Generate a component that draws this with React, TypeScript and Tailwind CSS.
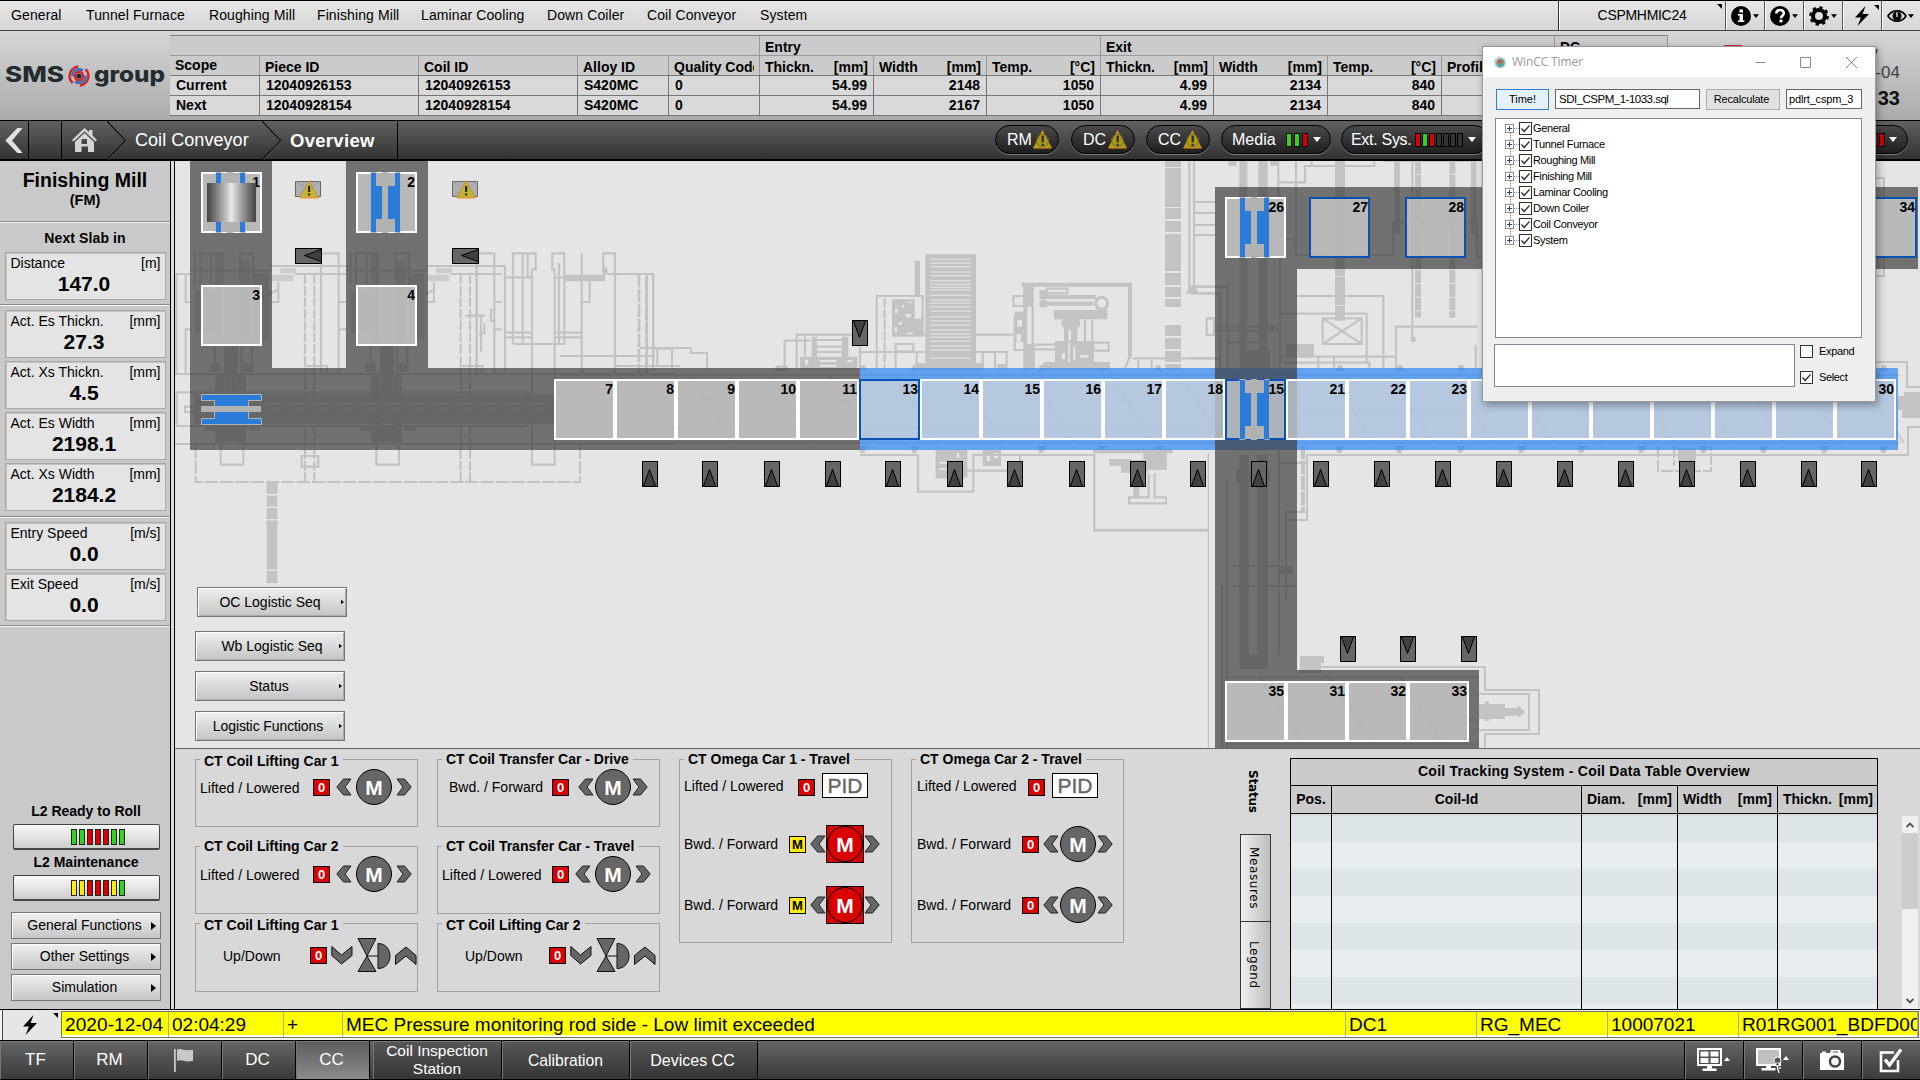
import React from "react";

const OX = 175;
const OY = 161;

/* ---------- small glyphs ---------- */

function Bolt({ className = "" }: { className?: string }) {
  return (
    <svg viewBox="0 0 16 20" className={className}>
      <path d="M11.5 0 1 11.5h6L3.5 20 15 8H8.6z" fill="#000" />
    </svg>
  );
}

function Warning({ className = "" }: { className?: string }) {
  return (
    <svg viewBox="0 0 20 20" className={className}>
      <path d="M10 .8 19.4 19H.6z" fill="#a89c1c" stroke="#e08a1e" strokeWidth="1" />
      <circle cx="10" cy="11" r="6.4" fill="none" stroke="#6d6a30" strokeWidth="1" />
      <path d="M9 6h2.4v7H9zM9 14.4h2.4v2.2H9z" fill="#2e2a08" />
    </svg>
  );
}

function Caret({ className = "" }: { className?: string }) {
  return (
    <svg viewBox="0 0 8 5" className={className}>
      <path d="M0 0h8L4 5z" fill="currentColor" />
    </svg>
  );
}

/* ---------- menu bar ---------- */

const MENU: [string, string][] = [
  ["General", "w-[75px]"],
  ["Tunnel Furnace", "w-[123px]"],
  ["Roughing Mill", "w-[108px]"],
  ["Finishing Mill", "w-[104px]"],
  ["Laminar Cooling", "w-[126px]"],
  ["Down Coiler", "w-[100px]"],
  ["Coil Conveyor", "w-[113px]"],
  ["System", "w-[80px]"],
];

function ToolCell({ children }: { children: React.ReactNode }) {
  return (
    <div className="relative flex h-full w-[39px] shrink-0 items-center border-l border-[#555] pl-[5px] shadow-[inset_1px_0_0_#fff]">
      {children}
    </div>
  );
}

function MenuBar() {
  return (
    <div className="flex h-[31px] shrink-0 border-t border-b border-t-black border-b-[#444] bg-gradient-to-b from-[#e6e6e6] to-[#d6d6d6]">
      <div className="flex items-center pl-[11px] text-[14px] tracking-[0.1px] text-black">
        {MENU.map(([t, w]) => (
          <div key={t} className={w + " whitespace-nowrap"}>{t}</div>
        ))}
      </div>
      <div className="grow" />
      <div className="relative flex w-[167px] items-center justify-center border-l border-[#333] text-[14px] -tracking-[0.300px] shadow-[inset_1px_0_0_#fff]">
        CSPMHMIC24
        <svg viewBox="0 0 5 5" className="absolute top-[3px] right-[3px] h-[5px] w-[5px]"><path d="M0 0h5v5z" /></svg>
      </div>
      <ToolCell>
        <svg viewBox="0 0 20 20" className="h-5 w-5"><circle cx="10" cy="10" r="10" /><path d="M8.4 3.6h3.6v3H8.4zM7 8h5v6.4h1.4V16H7v-1.6h1.6V9.6H7z" fill="#fff" /></svg>
        <Caret className="ml-[2px] h-[4px] w-[6px]" />
      </ToolCell>
      <ToolCell>
        <svg viewBox="0 0 20 20" className="h-5 w-5"><circle cx="10" cy="10" r="10" /><path d="M6.3 7.6C6.3 2.9 14 3 13.8 7.3c-.1 2.400-2.800 2.600-2.800 5" fill="none" stroke="#fff" strokeWidth="2.6" /><rect x="9.5" y="13.6" width="3" height="2.8" fill="#fff" /></svg>
        <Caret className="ml-[2px] h-[4px] w-[6px]" />
      </ToolCell>
      <ToolCell>
        <svg viewBox="0 0 20 20" className="h-5 w-5">
          <circle cx="10" cy="10" r="6" fill="none" stroke="#000" strokeWidth="4" />
          <circle cx="10" cy="10" r="8.6" fill="none" stroke="#000" strokeWidth="2.4" strokeDasharray="3.3 3.45" />
        </svg>
        <Caret className="ml-[2px] h-[4px] w-[6px]" />
      </ToolCell>
      <ToolCell>
        <Bolt className="ml-[5px] h-[20px] w-[18px]" />
        <svg viewBox="0 0 5 5" className="absolute top-[4px] right-[2px] h-[5px] w-[5px]"><path d="M0 0h5v5z" /></svg>
      </ToolCell>
      <ToolCell>
        <svg viewBox="0 0 22 16" className="h-4 w-[20px]">
          <path d="M1 8C6 .5 16 .5 21 8 16 15.500 6 15.500 1 8z" fill="none" stroke="#000" strokeWidth="1.8" />
          <circle cx="11" cy="8" r="5" />
          <path d="M11 4v5" stroke="#ddd" strokeWidth="1.6" />
        </svg>
        <Caret className="ml-[1px] h-[4px] w-[6px]" />
      </ToolCell>
    </div>
  );
}

/* ---------- header with piece table ---------- */

type Col = { w: string; h: string; u?: string; a: string; b: string };
const COLS: Col[] = [
  { w: "w-[90px]", h: "Scope", a: "Current", b: "Next" },
  { w: "w-[159px]", h: "Piece ID", a: "12040926153", b: "12040928154" },
  { w: "w-[159px]", h: "Coil ID", a: "12040926153", b: "12040928154" },
  { w: "w-[91px]", h: "Alloy ID", a: "S420MC", b: "S420MC" },
  { w: "w-[91px]", h: "Quality Code", a: "0", b: "0" },
  { w: "w-[114px]", h: "Thickn.", u: "[mm]", a: "54.99", b: "54.99" },
  { w: "w-[113px]", h: "Width", u: "[mm]", a: "2148", b: "2167" },
  { w: "w-[114px]", h: "Temp.", u: "[°C]", a: "1050", b: "1050" },
  { w: "w-[113px]", h: "Thickn.", u: "[mm]", a: "4.99", b: "4.99" },
  { w: "w-[114px]", h: "Width", u: "[mm]", a: "2134", b: "2134" },
  { w: "w-[114px]", h: "Temp.", u: "[°C]", a: "840", b: "840" },
  { w: "w-[113px]", h: "Profil", a: "", b: "" },
  { w: "w-[113px]", h: "", a: "", b: "" },
];

function Header() {
  const groups: [string, string][] = [
    ["w-[590px]", ""],
    ["w-[341px]", "Entry"],
    ["w-[454px]", "Exit"],
    ["w-[113px]", "DC"],
  ];
  return (
    <div className="flex h-[89px] shrink-0 bg-gradient-to-b from-[#d6d6d6] to-[#ababab]">
      <div className="w-[170px] shrink-0 pt-[30px]">
        <svg viewBox="0 0 170 32" className="h-8 w-[170px]">
          <g fontFamily="Inter, sans-serif" fontWeight="800" fill="#222c30">
            <text x="5" y="21" fontSize="21.500" textLength="59" lengthAdjust="spacingAndGlyphs">SMS</text>
            <text x="94" y="21" fontSize="21.500" textLength="71" lengthAdjust="spacingAndGlyphs">group</text>
          </g>
          <g fill="none" strokeWidth="2.400">
            <circle cx="79" cy="15" r="9.500" stroke="#d6202c" strokeDasharray="22 7.800" strokeDashoffset="8" />
            <circle cx="79" cy="15" r="6.800" stroke="#2b74b8" strokeDasharray="15 6" />
            <circle cx="79" cy="15" r="4.200" stroke="#d6202c" />
          </g>
          <circle cx="79" cy="15" r="2.600" fill="#222c30" />
        </svg>
      </div>
      <div className="mt-[4px] w-[1498px] shrink-0 text-[14px] font-bold">
        <div className="flex h-[20px] border-t border-[#808080] bg-[#cbcbcb]">
          {groups.map(([w, t], i) => (
            <div key={i} className={w + " border-r border-[#999] pt-[4px] pl-[5px] leading-[14px]"}>{t}</div>
          ))}
        </div>
        <div className="flex h-[20px] border-t border-[#999] bg-[#cbcbcb]">
          {COLS.map((c, i) => (
            <div key={i} className={c.w + " flex justify-between overflow-hidden whitespace-nowrap border-r border-[#999] pr-[5px] pl-[5px] leading-[14px] " + (i ? "pt-[4px]" : "pt-[2px]")}>
              <span className="overflow-hidden">{c.h}</span>
              <span>{c.u}</span>
            </div>
          ))}
        </div>
        {(["a", "b"] as const).map((k) => (
          <div key={k} className="flex h-[20px] border-t border-[#777] bg-[#d9d9d9]">
            {COLS.map((c, i) => (
              <div key={i} className={c.w + " border-r border-[#777] px-[6px] pt-[2px] leading-[14px] " + (i > 4 ? "text-right" : "")}>{c[k]}</div>
            ))}
          </div>
        ))}
        <div className="h-[1px] bg-[#777]" />
      </div>
      <div className="flex grow flex-col items-end pr-[20px]">
        <div className="flex w-full justify-end pt-[14px] pr-[22px] text-[16px] leading-[16px] text-[#333]">
          <div className="mr-[92px] h-[10px] w-[18px] bg-[#d6202c]" />
          Friday
        </div>
        <div className="mt-[3px] text-[17px] leading-[17px] text-[#444]">2020-12-04</div>
        <div className="mt-[8px] text-[20px] leading-[18px] font-bold text-[#111]">02:04:33</div>
      </div>
    </div>
  );
}

/* ---------- navigation bar ---------- */

function Led({ c }: { c: string }) {
  return <span className={"h-[14px] w-[6px] border border-black " + c} />;
}

function Pill({ children, className = "" }: { children: React.ReactNode; className?: string }) {
  return (
    <div className={"flex h-[29px] shrink-0 items-center rounded-full border border-black bg-gradient-to-b from-[#4a4a4a] to-[#1f1f1f] text-[16px] text-white shadow-[0_1px_0_#777] " + className}>
      {children}
    </div>
  );
}

function NavSep() {
  return (
    <svg viewBox="0 0 20 39" className="h-[39px] w-[20px] shrink-0">
      <path d="M0 0 19 19.500 0 39" fill="none" stroke="#111" strokeWidth="1.500" />
      <path d="M1.500 0 20 19.500 1.500 39" fill="none" stroke="#777" strokeWidth=".6" />
    </svg>
  );
}

const RED = "bg-[#d80000]";
const GREEN = "bg-[#32d21e]";
const OFF = "bg-[#333]";

function NavBar() {
  return (
    <div className="flex h-[41px] shrink-0 border-t border-b-2 border-black bg-gradient-to-b from-[#616161] to-[#333] text-white">
      <div className="flex w-[29px] items-center justify-center border-r border-black">
        <svg viewBox="0 0 18 26" className="h-[25px] w-[18px]"><path d="M12.500 0H18L7 13l11 13h-5.500L0 13z" fill="#e2e2e2" /></svg>
      </div>
      <div className="w-[33px] border-r border-black" />
      <div className="flex w-[45px] items-center pl-[10px]">
        <svg viewBox="0 0 25 24" className="h-6 w-[25px]"><path d="M12.500 0 17 4.200V2h3.500v5.600L25 12l-1.600 1.600L12.500 3.200 1.600 13.600 0 12z" fill="#d4d4d4" /><path d="M12.500 5 22 14v10h-6v-5.500H9.500V24H3V14zM9.500 11v5H15v-5z" fill="#d4d4d4" fillRule="evenodd" /></svg>
      </div>
      <NavSep />
      <div className="flex w-[135px] items-center pt-[1px] pl-[8px] text-[18px] tracking-[0.05px]">Coil Conveyor</div>
      <NavSep />
      <div className="flex w-[116px] items-center border-r border-black pt-[1px] pl-[8px] text-[18.500px] font-bold tracking-[0.3px]">Overview</div>
      <div className="flex grow items-start pt-[4px] pl-[597px]">
        <Pill className="w-[64px] pl-[11px]">RM<Warning className="ml-[1px] h-[19px] w-[19px]" /></Pill>
        <Pill className="ml-[12px] w-[64px] pl-[11px]">DC<Warning className="ml-[2px] h-[19px] w-[19px]" /></Pill>
        <Pill className="ml-[11px] w-[64px] pl-[11px]">CC<Warning className="ml-[2px] h-[19px] w-[19px]" /></Pill>
        <Pill className="ml-[11px] w-[110px] pl-[10px]">
          Media
          <span className="ml-[10px] flex gap-[2px]"><Led c={GREEN} /><Led c={GREEN} /><Led c={RED} /></span>
          <Caret className="ml-[5px] h-[5px] w-[8px]" />
        </Pill>
        <Pill className="ml-[10px] w-[148px] pl-[9px]">
          <span className="-tracking-[0.300px]">Ext. Sys.</span>
          <span className="ml-[4px] flex gap-[1px]"><Led c={RED} /><Led c={GREEN} /><Led c={RED} /><Led c={OFF} /><Led c={OFF} /><Led c={OFF} /><Led c={OFF} /></span>
          <Caret className="ml-[5px] h-[5px] w-[8px]" />
        </Pill>
        <div className="grow" />
        <Pill className="mr-[12px] w-[110px] justify-end pr-[10px]">
          <span className="flex gap-[1px]"><Led c={RED} /><Led c={RED} /><Led c={RED} /></span>
          <Caret className="ml-[4px] h-[5px] w-[8px]" />
        </Pill>
      </div>
    </div>
  );
}

/* ---------- left sidebar ---------- */

function ValueBox({ label, unit, value }: { label: string; unit: string; value: string }) {
  return (
    <div className="mx-auto h-[48px] w-[161px] border border-[#a9a9a9] bg-[#e4e4e4] shadow-[inset_1px_1px_0_#c4c4c4]">
      <div className="flex justify-between pt-[2px] pr-[4px] pl-[5px] text-[14px] leading-[16px]">
        <span>{label}</span><span>{unit}</span>
      </div>
      <div className="pr-[2px] text-center text-[21px] leading-[25px] font-bold">{value}</div>
    </div>
  );
}

function Rule() {
  return <div className="h-[2px] w-full border-t border-b border-t-[#8a8a8a] border-b-[#f4f4f4]" />;
}

function SideButton({ children }: { children: React.ReactNode }) {
  return (
    <div className="relative mx-auto mb-[4px] flex h-[27px] w-[150px] translate-x-[1px] items-center justify-center border border-[#777] bg-gradient-to-b from-[#f0f0f0] to-[#c6c6c6] pr-[3px] text-[14px] shadow-[inset_1px_1px_0_#fff]">
      {children}
      <svg viewBox="0 0 5 8" className="absolute right-[4px] h-[8px] w-[5px]"><path d="M0 0 5 4 0 8z" /></svg>
    </div>
  );
}

function LedButton({ leds }: { leds: string[] }) {
  return (
    <div className="mx-auto flex h-[26px] w-[147px] translate-x-[1px] items-center gap-[2px] rounded-[2px] border border-b-2 border-[#444] bg-gradient-to-b from-[#fafafa] to-[#cdcdcd] pl-[57px]">
      {leds.map((l, i) => <span key={i} className={"h-[16px] w-[6px] border border-[#222] " + l} />)}
    </div>
  );
}

const YEL = "bg-[#ffee00]";

function Sidebar() {
  return (
    <div className="flex w-[175px] shrink-0 border-r border-black bg-[#c9c9c9]">
      <div className="flex w-[170px] flex-col">
        <div className="h-[60px] pt-[9px] text-center text-[19.500px] leading-[21px] font-bold">
          Finishing Mill
          <div className="text-[14.500px] leading-[19px]">(FM)</div>
        </div>
        <Rule />
        <div className="pt-[7px] pb-[6px] text-center text-[14px] leading-[16px] font-bold tracking-[0.1px]">Next Slab in</div>
        <ValueBox label="Distance" unit="[m]" value="147.0" />
        <div className="h-[4px]" />
        <Rule />
        <div className="mt-[4px] flex flex-col gap-[3px]">
          <ValueBox label="Act. Es Thickn." unit="[mm]" value="27.3" />
          <ValueBox label="Act. Xs Thickn." unit="[mm]" value="4.5" />
          <ValueBox label="Act. Es Width" unit="[mm]" value="2198.1" />
          <ValueBox label="Act. Xs Width" unit="[mm]" value="2184.2" />
        </div>
        <div className="h-[5px]" />
        <Rule />
        <div className="mt-[4px] flex flex-col gap-[3px]">
          <ValueBox label="Entry Speed" unit="[m/s]" value="0.0" />
          <ValueBox label="Exit Speed" unit="[m/s]" value="0.0" />
        </div>
        <div className="h-[4px]" />
        <Rule />
        <div className="grow" />
        <div className="h-[21px] pl-[2px] text-center text-[14px] leading-[16px] font-bold">L2 Ready to Roll</div>
        <LedButton leds={[GREEN, GREEN, RED, RED, RED, GREEN, GREEN]} />
        <div className="mt-[4px] h-[21px] pl-[2px] text-center text-[14px] leading-[16px] font-bold">L2 Maintenance</div>
        <LedButton leds={[YEL, YEL, RED, RED, RED, YEL, GREEN]} />
        <div className="h-[11px]" />
        <SideButton>General Functions</SideButton>
        <SideButton>Other Settings</SideButton>
        <SideButton>Simulation</SideButton>
        <div className="h-[4px]" />
      </div>
      <div className="w-[1px] bg-black" />
      <div className="grow bg-[#dcdcdc]" />
    </div>
  );
}

/* ---------- plant drawing behind the conveyor ---------- */

const SLATS = [58, 70, 80, 96, 107, 122, 133, 142, 150, 166, 180, 190, 200, 214, 230, 242, 255, 270, 282, 292, 304, 317, 330, 355];

function LiftUnit({ x }: { x: number }) {
  return (
    <g transform={"translate(" + x + " 0)"}>
      <path d="M285 108H525M45 122H290M310 155V216H291M262 205 310 178M360 132H513M438 70V430M441 70H491V430M491 216H513M513 298H491M390 408H455V430" />
      <path d="M390 132V756M418 132V756" strokeDasharray="30 5" />
      <path d="M76 160V70H142V160M195 150V70H234V150M108 75V160M60 70V160M120 350V430M150 350V430M200 350V430M230 350V400" />
      <path d="M137 645V704H205V645" />
      <g fill="#c3c3c3" stroke="none">
        <path d="M316 114h48v16h-48zM290 134h66v20h-66zM120 70h22v260h-22zM195 90h30v240h-30zM60 180h60v130H60zM232 130h50v200h-50z" opacity=".75" />
        <path d="M150 345h40v90h-40zM105 400h30v26h-30zM205 400h30v26h-30zM120 432h28v210h-28zM150 432h35v60h-35zM187 432h26v210h-26zM148 590h40v46h-40zM88 590h32v12H88zM222 590h32v12h-32z" />
      </g>
    </g>
  );
}

function PlantDrawing() {
  return (
    <svg viewBox="175 161 1745 587" className="absolute inset-0 h-[587px] w-[1745px]" fill="none" stroke="#c3c3c3">
      <g transform="translate(175 230) scale(.33333)" strokeWidth="6.500">
        <path d="M3 132H45M32 132V216H45M4 132V430M45 298H32V430" />
        <LiftUnit x={0} />
        <LiftUnit x={467} />
        <path d="M990 108V430M1014 342V70H1082V118H1071V704H1139V118H1132V70H1168V342H1014M990 142H1071M990 308H1071M990 322H1071M1139 308H1220M1139 322H1220M1043 70V342M1058 70V142M1152 100V342M1139 142H1168M1220 70V430M1244 155V216H1222M1285 130V70H1320V430M1295 132H1435V400M1435 356H1500M1320 408H1500M1447 356V408" />
        <path d="M1392 132V430M1414 140V430" strokeDasharray="40 5" strokeWidth="8" />
        <path d="M1168 134h122v20h-122zM1283 112h14v22h-14z" fill="#c3c3c3" stroke="none" />
        <path d="M872 257H930M905 70V430M918 257V365M962 240H948V272H962M928 280V310H912" />
        <path d="M0 432H1500M0 642H1500M5 487H1058V588H5ZM80 530H30V546H80" />
        <path d="M60 497H1140V577H60Z" fill="#c3c3c3" />
        <path d="M270 520H1130M270 541H1130" stroke="#e0e0e0" strokeWidth="3" strokeDasharray="50 8 6 8" />
        <path d="M62 645V756H1215V645" strokeDasharray="40 6" />
        <path d="M380 678H430V710H380Z" />
      </g>
      <path d="M272 482V583" strokeWidth="11" strokeDasharray="12 1.500 11 1.500 11 1.500 49 1.500 12 90" />
      <path d="M560 356H655M640 274H653V370M647 274V370M640 348H691V353H707V370M672 348V368M640 366H680" strokeWidth="2" />

      <g transform="translate(760 240) scale(.33333)" strokeWidth="6.500">
        <path d="M74 384V302H150M110 384V284H290M135 290V350M171 300H245M171 320H245M171 336H245M350 384V168H488V284H760M407 312H460V334H407ZM295 336H740V384M407 336V384M470 336V384M668 336V384M705 336V384M300 320V384" />
        <path d="M374 175V384" strokeDasharray="28 5" />
        <path d="M50 380H80V390H50Z" fill="#c3c3c3" />
        <g fill="#c3c3c3" stroke="none">
          <path d="M155 290h16v60h-16zM245 290h20v60h-20zM120 350h172v40H120zM396 178h68v60h-68zM396 236h94v54h-94zM464 62h16v108h-16zM496 43h152v345H496zM470 370h200v20H470zM712 372h28v14h-28z" />
          <path d="M790 140h28v60h-28zM764 215h30v90h-30zM882 210h160v28H882zM905 236h55v24h-55zM912 258h40v50h-40zM885 303h40v80h-40zM930 303h72v76h-72zM792 312h33v75h-33zM850 366h200v22H850zM838 165h170v12H838zM838 150h24v20h-24z" />
          <path d="M530 630h92v82h-92zM1048 657h66v20h-66zM1083 660h80v38h-80zM1150 640h70v50h-70zM1120 740h18v34h-18zM1000 628h238v12h-238zM668 630h55v48h-55z" />
        </g>
        <g fill="#e5e5e5" stroke="none">
          <path d="M425 195h8v7h-8zM446 184h8v6h-8zM405 206h8v14h-8zM437 222h16v10h-16zM416 246h10v8h-10zM403 262h8v12h-8zM440 278h20v5h-20zM135 360h10v14h-10zM180 360h50v6h-50zM180 374h50v6h-50zM262 360h16v6h-16z" />
          <path d="M772 240h14v20h-14zM770 282h12v22h-12zM925 270h8v30h-8zM940 320h6v40h-6zM960 345h26v8h-26zM905 340h10v18h-10zM538 665h40v6h-40zM538 685h40v6h-40zM590 640h8v14h-8zM680 645h10v18h-10zM702 640h12v14h-12z" />
        </g>
        <path d={SLATS.map((y) => "M510 " + y + "H632").join("")} stroke="#dcdcdc" strokeWidth="4.500" />
        <path d="M785 134H1110V350" strokeWidth="12" />
        <path d="M796 140V390" strokeWidth="12" />
        <path d="M845 191H1000" strokeWidth="12" />
        <circle cx="1025" cy="190" r="18" strokeWidth="9" />
        <circle cx="850" cy="191" r="9" fill="#c3c3c3" />
        <path d="M818 140V320M760 168H792V198H760ZM764 230V330H792M860 146H922V160H860ZM975 238V310M997 238V310M1000 308H1046V332H1000ZM818 314H885M818 328H885M1110 350 1095 384M1118 355H1380V160H1290M1135 360V384M1175 360V384M1302 140H1403V420M1340 235H1362V285H1340Z" />
        <path d="M1288 -240V150M1302 -240V150M1305 -114H1365M1305 -81H1365M1305 -45H1365M1305 -15H1365" />
        <path d="M1282 158 1290 145H1305L1312 158Z" fill="#c3c3c3" />
        <path d="M300 645H474V755H640V645H1003V871M530 630V712H612V630M620 692H742M780 645V665M1166 700V772H1107V790H1218V772H1184V700" />
        <path d="M1000 871H1345" strokeWidth="9" />
        <path d="M1345 640V1524" strokeWidth="4" />
      </g>
      <path d="M1173 161v6m0 1v39m0 1v11m0 2v11m0 2v37m0 2v12m0 2v10m0 2v8m0 18v11m0 2v11m0 2v11m0 2v5" strokeWidth="16" />

      <g transform="translate(1190 150) scale(.33333)" strokeWidth="6.500">
        <path d="M265 97H345V48H553V33M265 33V160M365 33V48M318 33V315H610V218H860V320H900M580 33H860M667 33V575M318 438H580V655M270 491H530V640M398 505H515V582H398ZL515 582M515 505L398 582M270 620H618V530H862M618 620V655M275 638H538V655M385 620V655M432 620V655M857 585V655M90 430V655M112 410V655M0 430H90M0 410H112M75 530H265M75 542H265M0 625H75M112 577H200M270 160V655M288 268H320" />
        <path d="M450 33V512" strokeWidth="30" strokeDasharray="85 2" />
        <path d="M684 33V503M787 33V503" strokeWidth="18" strokeDasharray="38 3" />
        <path d="M621 33V253M851 33V253" strokeWidth="17" />
        <path d="M148 33h24v600h-24zM205 33h28v600h-28zM115 33h24v14h-24zM240 33h24v14h-24zM288 582h84v38h-84zM150 600h90v55h-90zM240 525h25v20h-25z" fill="#c3c3c3" stroke="none" />
        <circle cx="670" cy="568" r="5" />
      </g>

      <g strokeWidth="2">
        <path d="M1872 178H1884V276H1872M1872 362H1907V387H1920M1279 450V463H1307M1307 520V455H1908V427H1920M1286 600V512H1303M1286 520H1308M1300 667H1485V690H1539V734H1485V748M1479 694H1529V730H1479" />
        <path d="M1303 445V513" strokeWidth="4" strokeDasharray="14 1.500" />
        <path d="M1658 446V471H1711V446M1674 446V466" strokeDasharray="12 2" />
        <path d="M1227 480V748M1232 586H1297M1232 566H1279M1222 585V748M1279 450V655" />
      </g>
      <g fill="#c3c3c3" stroke="none">
        <path d="M1898 396h6v-4h16v26h-18v-8h-4zM1678 448h18v15h-18zM1479 704h6v-3h4v3h16v15h-16v2h-4v-2h-6zM1505 708h14v8h-14zM1518 705l7 7-7 6zM1300 656h24v7h-3v10h-21z" />
        <path d="M1239 455h10v205h-10zM1257 455h11v205h-11zM1236 470h34v12h-34zM1240 655h28v14h-28zM1279 566h14v8h-14z" />
      </g>
      <g strokeWidth="2" opacity=".8">
        <path d="M560 375H1900M560 443H1900M676 400H1200M640 428H1200M1300 410H1880M1225 677H1479M1240 720H1479M1225 744H1479" />
        {[690, 770, 830, 895, 960, 1030, 1110, 1180, 1330, 1390, 1450, 1510, 1560, 1630, 1690, 1740, 1800, 1860].map((x) => (
          <path key={x} d={"M" + x + " 375l44 68"} />
        ))}
        <path d="M1260 677l44 68M1330 677l44 68M1400 677l44 68" />
      </g>
      <g fill="#c3c3c3" stroke="none">
        {[863, 915, 1042, 1102, 1158, 1340, 1400, 1461, 1522, 1582, 1642, 1704, 1764, 1825, 1884].map((x) => (
          <path key={x} d={"M" + (x - 4) + " 446h8l-3 7h-4zM" + (x - 4) + " 371h8l-2-6h-4z"} />
        ))}
      </g>
    </svg>
  );
}

/* ---------- conveyor diagram ---------- */

function place(x: number, y: number, w?: number, h?: number): React.CSSProperties {
  return { left: x - OX, top: y - OY, width: w, height: h };
}

const BANDS = [
  [190, 161, 82, 207],
  [346, 161, 82, 207],
  [190, 368, 670, 82],
  [1215, 187, 82, 561],
  [1297, 187, 621, 82],
  [1297, 670, 182, 78],
];

type Slot = [n: number | "", x: number, y: number, blue?: boolean, car?: boolean];
const SLOTS: Slot[] = [
  [1, 201, 172, false, true], [2, 356, 172, false, true], [3, 201, 285], [4, 356, 285],
  [7, 554, 379], [8, 615, 379], [9, 676, 379], [10, 737, 379], [11, 798, 379],
  [14, 920, 379], [15, 981, 379], [16, 1042, 379], [17, 1103, 379], [18, 1164, 379],
  [13, 859, 379, true],
  [15, 1225, 379, true, true],
  [21, 1286, 379], [22, 1347, 379], [23, 1408, 379], ["", 1469, 379], ["", 1530, 379], ["", 1591, 379],
  ["", 1652, 379], ["", 1713, 379], ["", 1774, 379], [30, 1835, 379],
  [26, 1225, 197, false, true], [27, 1309, 197, true], [28, 1405, 197, true], [34, 1856, 197, true],
  [35, 1225, 681], [31, 1286, 681], [32, 1347, 681], [33, 1408, 681],
];

const UP_X = [642, 702, 764, 825, 885, 947, 1007, 1069, 1130, 1190, 1251, 1313, 1374, 1435, 1496, 1557, 1618, 1679, 1740, 1801, 1861];
const DOWN: [number, number][] = [[852, 320], [1340, 636], [1400, 636], [1461, 636]];

function Car() {
  return (
    <svg viewBox="0 0 61 61" className="absolute -top-[2px] -left-[2px] h-[61px] w-[61px]">
      <path d="M14.500 0h6v13.500h19V0h5v61h-5V47.500h-19V61h-6z" fill="#b2b2b2" />
      <path d="M20 1h19v13H20zM20 47h19v13H20z" fill="#b2b2b2" />
      <path d="M15 1h5v13h19V1h5v59h-5V47H20v13h-5z" fill="#2b7bd9" />
      <path d="M26 0h6v61h-6z" fill="#b2b2b2" />
    </svg>
  );
}

function SlotBox({ slot }: { slot: Slot }) {
  const [n, x, y, blue, car] = slot;
  return (
    <div
      className={"absolute border-2 bg-[#d8d8d8]/70 " + (blue ? "border-[#0752b3]" : "border-white")}
      style={place(x, y, 61, 61)}
    >
      {car && <Car />}
      <span className="absolute top-0 right-0 text-[14px] leading-[16px] font-bold text-black">{n}</span>
    </div>
  );
}

function Arrow({ x, y, dir }: { x: number; y: number; dir: "up" | "down" }) {
  return (
    <svg viewBox="0 0 16 26" className="absolute h-[26px] w-[16px]" style={place(x, y)}>
      <rect x=".5" y=".5" width="15" height="25" fill="#666" stroke="#000" />
      <path d={dir === "up" ? "M1.500 25 7.500 8.500 13.500 25" : "M1.500 1 7.500 17.500 13.500 1"} fill="#404040" stroke="#000" />
    </svg>
  );
}

function DiagramButton({ x, y, children }: { x: number; y: number; children: React.ReactNode }) {
  return (
    <div
      className="absolute flex items-center justify-center border border-[#777] bg-gradient-to-b from-[#f0f0f0] to-[#c4c4c4] pr-[4px] text-[14px] shadow-[inset_1px_1px_0_#fff,inset_-1px_-1px_0_#aaa]"
      style={place(x, y, 150, 30)}
    >
      {children}
      <svg viewBox="0 0 4 6" className="absolute right-[2px] h-[6px] w-[3px]"><path d="M0 0 4 3 0 6z" /></svg>
    </div>
  );
}

function Diagram() {
  return (
    <div className="relative h-[587px] shrink-0 overflow-hidden bg-[#e5e5e5]">
      <PlantDrawing />
      <div className="absolute bg-[#2c86f4]/70" style={place(860, 368, 1038, 82)} />
      {BANDS.map(([x, y, w, h], i) => (
        <div key={i} className="absolute bg-[#3a3a3a]/68" style={place(x, y, w, h)} />
      ))}
      {SLOTS.map((s, i) => <SlotBox key={i} slot={s} />)}
      <div className="absolute bg-gradient-to-r from-[#444] via-[#e8e8e8] to-[#444]" style={place(207, 183, 49, 39)} />
      <svg viewBox="0 0 61 31" className="absolute h-[31px] w-[61px]" style={place(201, 394)}>
        <path d="M.5.5h60v6h-13v18h13v6H.5v-6h13v-18H.5z" fill="#2b7bd9" stroke="#b2b2b2" />
        <path d="M0 12h60v6H0z" fill="#b2b2b2" />
      </svg>
      {[295, 452].map((x) => (
        <React.Fragment key={x}>
          <svg viewBox="0 0 26 19" className="absolute h-[19px] w-[26px]" style={place(x, 180)}>
            <path d="M.5 1.500h25v15H.5z" fill="#b0b0b0" stroke="#6a6a6a" />
            <path d="M1 2 13 9 25 2M1 16l9-6" fill="none" stroke="#999" strokeWidth=".7" />
            <path d="M14 .8 23.300 17.500H5z" fill="#c2b436" stroke="#cc8a3c" strokeWidth="1" />
            <path d="M5 18h18.500" stroke="#f59a33" />
            <path d="M13 6h2.200v6H13zM13 13.500h2.200v2H13z" fill="#2e2a08" />
          </svg>
          <svg viewBox="0 0 27 16" className="absolute h-[16px] w-[27px]" style={place(x, 248)}>
            <rect x=".5" y=".5" width="26" height="15" fill="#666" stroke="#000" />
            <path d="M26 1.500 9.500 7.500 26 13.500" fill="#404040" stroke="#000" />
          </svg>
        </React.Fragment>
      ))}
      {UP_X.map((x) => <Arrow key={x} x={x} y={461} dir="up" />)}
      {DOWN.map(([x, y]) => <Arrow key={x} x={x} y={y} dir="down" />)}
      <DiagramButton x={197} y={587}>OC Logistic Seq</DiagramButton>
      <DiagramButton x={195} y={631}><span className="pl-[8px]">Wb Logistic Seq</span></DiagramButton>
      <DiagramButton x={195} y={671}><span className="pl-[2px]">Status</span></DiagramButton>
      <DiagramButton x={195} y={711}><span className="-tracking-[0.100px]">Logistic Functions</span></DiagramButton>
    </div>
  );
}

/* ---------- device groups ---------- */

function Badge({ className = "", manual }: { className?: string; manual?: boolean }) {
  return (
    <div className={"flex h-[17px] w-[17px] shrink-0 items-center justify-center border border-black text-[13px] leading-none font-bold " + (manual ? "bg-[#ffea00] text-black " : "bg-[#d80000] text-white ") + className}>
      {manual ? "M" : "0"}
    </div>
  );
}

function Chev({ flip, className = "" }: { flip?: boolean; className?: string }) {
  return (
    <svg viewBox="0 0 16 18" className={"h-[18px] w-[16px] shrink-0 " + (flip ? "-scale-x-100 " : "") + className}>
      <path d="M7.500 1H15L9 9l6 8H7.500L.8 9z" fill="#666" stroke="#222" />
    </svg>
  );
}

function Motor({ className = "" }: { className?: string }) {
  return (
    <div className={"flex h-[36px] w-[36px] shrink-0 items-center justify-center rounded-full border border-black bg-[#666] pt-[1px] text-[21px] font-bold text-white " + className}>
      M
    </div>
  );
}

function MotorFault() {
  return (
    <div className="flex h-[38px] w-[38px] shrink-0 items-center justify-center border border-black bg-[#d80000]">
      <div className="flex h-[36px] w-[36px] shrink-0 items-center justify-center rounded-full border border-black pt-[1px] text-[21px] font-bold text-white">M</div>
    </div>
  );
}

function Valve({ className = "" }: { className?: string }) {
  return (
    <svg viewBox="0 0 86 36" className={"h-[36px] w-[86px] shrink-0 " + className} fill="#666" stroke="#111">
      <path d="M.8 9.500v9L10.500 27 21 18.500v-9L10.500 18z" />
      <path d="M27 1.500h18l-9 17.500 9 15.500H27L36 19z" />
      <path d="M36 19h11" />
      <path d="M47 6.500c16 0 16 25 0 25z" />
      <path d="M64.500 27.500v-9L75 10l10 8.500v9L75 19z" />
    </svg>
  );
}

function Pid() {
  return (
    <div className="ml-[7px] flex h-[25px] w-[46px] shrink-0 items-center justify-center border border-black bg-white text-[21px] leading-none text-[#666] [-webkit-text-stroke:0.4px_#666]">
      PID
    </div>
  );
}

function Group({ title, className, titleClass = "", children }: { title: string; className: string; titleClass?: string; children: React.ReactNode }) {
  return (
    <div className={"relative shrink-0 border border-[#a2a2a2] text-[14px] " + className}>
      <div className={"absolute left-[4px] bg-[#d8d8d8] px-[4px] leading-[16px] font-bold whitespace-nowrap " + (titleClass || "-top-[9px]")}>{title}</div>
      {children}
    </div>
  );
}

function Row({ className, children }: { className: string; children: React.ReactNode }) {
  return <div className={"flex h-[38px] items-center whitespace-nowrap " + className}>{children}</div>;
}

function Label({ className, children }: { className: string; children: React.ReactNode }) {
  return <span className={"shrink-0 leading-[16px] " + className}>{children}</span>;
}

function TravelRows({ fault }: { fault?: boolean }) {
  return (
    <>
      {[0, 1].map((i) => (
        <Row key={i} className={i ? "mt-[23px]" : "mt-[21px]"}>
          {fault ? (
            <>
              <Label className="ml-[4px] w-[105px]">Bwd. / Forward</Label>
              <Badge manual />
              <Chev className="ml-[4px]" />
              <MotorFault />
              <Chev flip />
            </>
          ) : (
            <>
              <Label className="ml-[5px] w-[105px]">Bwd. / Forward</Label>
              <Badge />
              <Chev className="ml-[4px]" />
              <Motor className="ml-[1px]" />
              <Chev flip className="ml-[1px]" />
            </>
          )}
        </Row>
      ))}
    </>
  );
}

function DeviceGroups() {
  return (
    <div className="flex shrink-0 gap-[19px] pt-[10px] pl-[20px]">
      <div className="flex w-[223px] flex-col">
        {["CT Coil Lifting Car 1", "CT Coil Lifting Car 2"].map((t, i) => (
          <Group key={t} title={t} className="mb-[19px] h-[68px]" titleClass={i ? "-top-[9px]" : "-top-[7px]"}>
            <Row className="mt-[8px]">
              <Label className="mt-[1px] ml-[4px] w-[113px]">Lifted / Lowered</Label>
              <Badge />
              <Chev className="ml-[6px]" />
              <Motor className="ml-[4px]" />
              <Chev flip className="ml-[4px]" />
            </Row>
          </Group>
        ))}
        <Group title="CT Coil Lifting Car 1" className="-mt-[10px] h-[69px]" titleClass="-top-[7px]">
          <Row className="mt-[12px]">
            <Label className="mt-[2px] ml-[27px] w-[87px]">Up/Down</Label>
            <Badge />
            <Valve className="ml-[4px]" />
          </Row>
        </Group>
      </div>
      <div className="flex w-[223px] flex-col">
        <Group title="CT Coil Transfer Car - Drive" className="mb-[19px] h-[68px]">
          <Row className="mt-[8px]">
            <Label className="ml-[11px] w-[103px]">Bwd. / Forward</Label>
            <Badge />
            <Chev className="ml-[9px]" />
            <Motor className="ml-[1px]" />
            <Chev flip className="ml-[1px]" />
          </Row>
        </Group>
        <Group title="CT Coil Transfer Car - Travel" className="mb-[9px] h-[68px]">
          <Row className="mt-[8px]">
            <Label className="mt-[1px] ml-[4px] w-[110px]">Lifted / Lowered</Label>
            <Badge />
            <Chev className="ml-[6px]" />
            <Motor className="ml-[4px]" />
            <Chev flip className="ml-[4px]" />
          </Row>
        </Group>
        <Group title="CT Coil Lifting Car 2" className="h-[69px]" titleClass="-top-[7px]">
          <Row className="mt-[12px]">
            <Label className="mt-[2px] ml-[27px] w-[84px]">Up/Down</Label>
            <Badge />
            <Valve className="ml-[4px]" />
          </Row>
        </Group>
      </div>
      <Group title="CT Omega Car 1 - Travel" className="h-[184px] w-[213px]">
        <Row className="mt-[6px]">
          <Label className="mt-[2px] ml-[4px] w-[114px]">Lifted / Lowered</Label>
          <Badge className="mt-[4px]" />
          <Pid />
        </Row>
        <TravelRows fault />
      </Group>
      <Group title="CT Omega Car 2 - Travel" className="h-[184px] w-[213px]">
        <Row className="mt-[6px]">
          <Label className="mt-[2px] ml-[5px] w-[111px]">Lifted / Lowered</Label>
          <Badge className="mt-[4px]" />
          <Pid />
        </Row>
        <TravelRows />
      </Group>
    </div>
  );
}

/* ---------- vertical tabs and coil table ---------- */

function SideTabs() {
  return (
    <div className="ml-[116px] flex w-[31px] shrink-0 flex-col font-['DejaVu_Sans'] text-[12px]">
      <div className="flex h-[85px] items-center justify-center pr-[3px] font-bold [writing-mode:vertical-rl]">
        <span className="pr-[3px] text-[12px] -tracking-[0.2px]">Status</span>
      </div>
      <div className="flex h-[87px] items-center justify-center border border-b-0 border-[#333] bg-gradient-to-r from-[#f0f0f0] to-[#bdbdbd] pr-[3px] [writing-mode:vertical-rl]">
        <span className="tracking-[0.600px]">Measures</span>
      </div>
      <div className="flex h-[88px] items-center justify-center border border-[#333] bg-gradient-to-r from-[#f0f0f0] to-[#bdbdbd] pr-[3px] [writing-mode:vertical-rl]">
        <span className="tracking-[0.600px]">Legend</span>
      </div>
    </div>
  );
}

function CoilTable() {
  const cols: [string, string, string][] = [
    ["w-[41px]", "Pos.", ""],
    ["w-[250px]", "Coil-Id", ""],
    ["w-[96px]", "Diam.", "[mm]"],
    ["w-[100px]", "Width", "[mm]"],
    ["w-[99px]", "Thickn.", "[mm]"],
  ];
  return (
    <div className="mt-[9px] ml-[19px] flex w-[588px] shrink-0 flex-col overflow-hidden border border-b-0 border-black text-[14px] font-bold">
      <div className="flex h-[26px] shrink-0 items-center justify-center bg-[#cbcbcb] pb-[2px] tracking-[0.250px]">
        Coil Tracking System - Coil Data Table Overview
      </div>
      <div className="flex h-[29px] shrink-0 border-t border-b border-black bg-[#cbcbcb]">
        {cols.map(([w, t, u], i) => (
          <div key={t} className={w + " flex items-center pl-[5px] " + (i < 4 ? "border-r border-black pr-[5px] " : "pr-[4px] ") + (u ? "justify-between" : "justify-center")}>
            <span>{t}</span>
            {u && <span>{u}</span>}
          </div>
        ))}
      </div>
      <div className="flex grow">
        {cols.map(([w, t], i) => (
          <div key={t} className={w + " overflow-hidden pt-[2px] " + (i < 4 ? "border-r border-black" : "")}>
            <div className="h-[26px] bg-[#dde5e8]" />
            {[0, 1, 2].map((r) => (
              <React.Fragment key={r}>
                <div className="h-[27px] bg-[#e8eef0]" />
                <div className="h-[27px] bg-[#dde5e8]" />
              </React.Fragment>
            ))}
            <div className="h-[5px] bg-[#e8eef0]" />
          </div>
        ))}
      </div>
    </div>
  );
}

function ScrollBar() {
  return (
    <div className="mt-[67px] ml-[24px] flex w-[16px] shrink-0 flex-col items-center bg-[#f0f0f0]">
      <svg viewBox="0 0 8 6" className="mt-[6px] h-[6px] w-[8px]"><path d="M.5 5 4 1.500 7.500 5" fill="none" stroke="#505050" strokeWidth="1.800" /></svg>
      <div className="mt-[5px] h-[76px] w-full bg-[#cdcdcd]" />
      <div className="grow" />
      <svg viewBox="0 0 8 6" className="mb-[5px] h-[6px] w-[8px]"><path d="M.5 1 4 4.500 7.500 1" fill="none" stroke="#505050" strokeWidth="1.800" /></svg>
    </div>
  );
}

/* ---------- alarm line and bottom navigation ---------- */

const ALARM: [string, string][] = [
  ["w-[107px]", "2020-12-04"],
  ["w-[115px]", "02:04:29"],
  ["w-[59px]", "+"],
  ["w-[1003px]", "MEC Pressure monitoring rod side - Low limit exceeded"],
  ["w-[131px]", "DC1"],
  ["w-[131px]", "RG_MEC"],
  ["w-[131px]", "10007021"],
  ["w-[179px]", "R01RG001_BDFD001"],
];

function AlarmLine() {
  return (
    <div className="flex h-[31px] shrink-0 border-t border-black bg-[#f2f2f2] pl-[2px]">
      <div className="relative flex w-[59px] items-center justify-center border-l border-[#444] bg-[#e6e6e6] pr-[4px]">
        <Bolt className="h-[20px] w-[16px]" />
        <svg viewBox="0 0 5 5" className="absolute top-[3px] right-[3px] h-[5px] w-[5px]"><path d="M0 0h5v5z" /></svg>
      </div>
      <div className="mt-[1px] flex h-[27px] w-[1858px] overflow-hidden border border-[#77775a] bg-white text-[19px] leading-[25px]">
        {ALARM.map(([w, t], i) => (
          <div key={t} className={w + " h-full shrink-0 overflow-hidden border-r border-[#aaa]"}>
            <div className={"h-[23px] bg-[#ffff00] pl-[3px] whitespace-nowrap " + (i ? "" : "tracking-[0.100px]")}>{t}</div>
          </div>
        ))}
      </div>
    </div>
  );
}

function BottomButton({ className, children }: { className: string; children: React.ReactNode }) {
  return (
    <div className={"flex shrink-0 items-center justify-center border-r border-black text-center shadow-[inset_1px_1px_0_#777] " + className}>
      {children}
    </div>
  );
}

function BottomBar() {
  const tab = "w-[74px] pr-[2px] text-[17px]";
  return (
    <div className="flex h-[40px] shrink-0 border-t border-b border-black bg-gradient-to-b from-[#666] to-[#3a3a3a] text-white">
      <BottomButton className={tab}>TF</BottomButton>
      <BottomButton className={tab}>RM</BottomButton>
      <BottomButton className={tab}>
        <svg viewBox="0 0 20 24" className="h-6 w-5"><path d="M0 1h1.800v23H0zM3 1.500c4-2 6 2 16 .3v11c-8 2.200-11-2-16 .2z" fill="#c8c8c8" /></svg>
      </BottomButton>
      <BottomButton className={tab}>DC</BottomButton>
      <BottomButton className={tab + " bg-gradient-to-b from-[#5c5c5c] to-[#8c8c8c]"}>CC</BottomButton>
      <div className="w-[3px]" />
      <BottomButton className="w-[129px] bg-gradient-to-b from-[#575757] to-[#353535] text-[15.500px] leading-[18px]">Coil Inspection<br />Station</BottomButton>
      <BottomButton className="w-[128px] bg-gradient-to-b from-[#575757] to-[#353535] pt-[1px] text-[15.700px]">Calibration</BottomButton>
      <BottomButton className="w-[128px] bg-gradient-to-b from-[#575757] to-[#353535] pt-[1px] pr-[2px] text-[16px]">Devices CC</BottomButton>
      <div className="grow border-r border-black" />
      <BottomButton className="w-[59px]">
        <svg viewBox="0 0 34 24" className="h-6 w-[34px]" fill="#fff"><path d="M0 0h25v18H0zM2 2v14h21V2zM3.500 3.500h8v5h-8zM13.500 3.500h8v5h-8zM3.500 10h8v5h-8zM13.500 10h8v5h-8z" fillRule="evenodd" /><path d="M10 18h5v2.500h4.500V23h-14v-2.500H10zM27 13h6l-3-4z" /></svg>
      </BottomButton>
      <BottomButton className="w-[59px]">
        <svg viewBox="0 0 34 26" className="h-[26px] w-[34px]"><path d="M0 1h25v18H0zM10 19h5v2h4.500v2.500h-14V21H10zM27 13h6l-3-4z" fill="#fff" /><path d="M2 3h21v14H2z" fill="#c0c0c0" /><circle cx="21.500" cy="13.500" r="3.500" fill="#555" stroke="#fff" /><path d="M20 16h3v3h-3z" fill="#333" stroke="#fff" strokeWidth=".8" /><path d="M21.500 18v3l1.500 5M24 20v2" stroke="#fff" fill="none" strokeWidth="1.300" /></svg>
      </BottomButton>
      <BottomButton className="w-[59px]">
        <svg viewBox="0 0 24 20" className="h-[20px] w-[24px]"><path d="M0 3h2V1.500h4V3h4l1-3h9l1 3h3v17H0z" fill="#fff" /><circle cx="15" cy="11.500" r="5" fill="none" stroke="#444" strokeWidth="2.500" /><path d="M13 2h5" stroke="#555" /></svg>
      </BottomButton>
      <div className="flex w-[58px] items-center justify-center shadow-[inset_1px_1px_0_#777]">
        <svg viewBox="0 0 24 25" className="h-[25px] w-[24px]"><path d="M15 4.500H2V23h17V12" fill="none" stroke="#fff" strokeWidth="2.600" /><path d="M6 11.500 10.500 17 22 1.500" fill="none" stroke="#fff" strokeWidth="3.400" /></svg>
      </div>
    </div>
  );
}

/* ---------- floating timer window ---------- */

function Check({ on }: { on?: boolean }) {
  return (
    <svg viewBox="0 0 13 13" className="h-[13px] w-[13px] shrink-0">
      <rect x=".5" y=".5" width="12" height="12" fill="#fff" stroke="#333" />
      {on && <path d="M2.500 6.500 5.200 9.500 10.500 3.300" fill="none" stroke="#222" strokeWidth="1.300" />}
    </svg>
  );
}

function TimerWindow() {
  const tree = ["General", "Tunnel Furnace", "Roughing Mill", "Finishing Mill", "Laminar Cooling", "Down Coiler", "Coil Conveyor", "System"];
  return (
    <div className="absolute top-[46px] left-[1482px] flex h-[356px] w-[394px] flex-col border border-[#999] bg-[#efefef] text-[11px] shadow-[2px_3px_8px_rgba(0,0,0,0.35)]">
      <div className="flex h-[30px] shrink-0 items-center bg-white pl-[10px] text-[#999]">
        <svg viewBox="0 0 14 14" className="h-[13px] w-[14px]"><circle cx="7" cy="7" r="6.500" fill="#c5d6cd" /><circle cx="7.500" cy="7.500" r="4.500" fill="#5aa5a8" /><circle cx="7" cy="6" r="2.500" fill="#c9604c" /></svg>
        <span className="ml-[5px] w-[243px] font-['Open_Sans'] text-[12px] -tracking-[0.100px]">WinCC Timer</span>
        <svg viewBox="0 0 103 12" className="h-3 w-[103px]" fill="none" stroke="#8a8a8a"><path d="M.5 6.500h10M45.500 1.500h10v10h-10zM102 1 91 12M91 1l11 11" /></svg>
      </div>
      <div className="mt-[12px] flex shrink-0 pl-[13px]">
        <div className="flex h-[21px] w-[53px] items-center justify-center border border-[#2a80d0] bg-[#e5f1fb]">Time!</div>
        <div className="ml-[6px] h-[20px] w-[145px] border border-[#666] bg-white pl-[3px] text-[11.500px] leading-[18px] -tracking-[0.500px]">SDI_CSPM_1-1033.sql</div>
        <div className="ml-[6px] flex h-[21px] w-[74px] items-center justify-center border border-[#adadad] bg-[#e1e1e1] pr-[3px] -tracking-[0.200px]">Recalculate</div>
        <div className="ml-[6px] h-[20px] w-[76px] border border-[#666] bg-white pl-[2px] leading-[18px] -tracking-[0.150px]">pdlrt_cspm_3</div>
      </div>
      <div className="relative mt-[8px] ml-[12px] h-[220px] w-[367px] shrink-0 border border-[#828790] bg-white pt-[1px] pl-[9px]">
        <div className="absolute top-[9px] left-[14px] h-[114px] border-l border-dotted border-[#888]" />
        {tree.map((t) => (
          <div key={t} className="relative flex h-[16px] items-center">
            <svg viewBox="0 0 9 9" className="mt-[1px] h-[9px] w-[9px] shrink-0"><rect x=".5" y=".5" width="8" height="8" fill="#f8f8f8" stroke="#919191" /><path d="M2 4.500h5M4.500 2v5" stroke="#2b478a" /></svg>
            <div className="w-[5px] border-t border-dotted border-[#888]" />
            <Check on />
            <span className="mb-[1px] ml-[1px] leading-[14px] -tracking-[0.350px] whitespace-nowrap">{t}</span>
          </div>
        ))}
      </div>
      <div className="mt-[6px] flex pl-[11px]">
        <div className="h-[43px] w-[301px] border border-[#828790] bg-white" />
        <div className="ml-[5px] flex flex-col gap-[13px] pt-[1px]">
          <div className="flex items-center gap-[6px]"><Check /><span className="leading-[13px] -tracking-[0.350px]">Expand</span></div>
          <div className="flex items-center gap-[6px]"><Check on /><span className="leading-[13px] -tracking-[0.350px]">Select</span></div>
        </div>
      </div>
    </div>
  );
}

export default function App() {
  return (
    <div className="relative flex h-[1080px] w-[1920px] flex-col overflow-hidden bg-[#d8d8d8] font-['Liberation_Sans',Arial,sans-serif] text-black">
      <MenuBar />
      <Header />
      <NavBar />
      <div className="flex h-[848px] shrink-0">
        <Sidebar />
        <div className="flex w-[1745px] flex-col">
          <Diagram />
          <div className="flex h-[261px] overflow-hidden border-t border-[#666] bg-[#d8d8d8]">
            <DeviceGroups />
            <SideTabs />
            <CoilTable />
            <ScrollBar />
          </div>
        </div>
      </div>
      <AlarmLine />
      <BottomBar />
      <TimerWindow />
    </div>
  );
}
